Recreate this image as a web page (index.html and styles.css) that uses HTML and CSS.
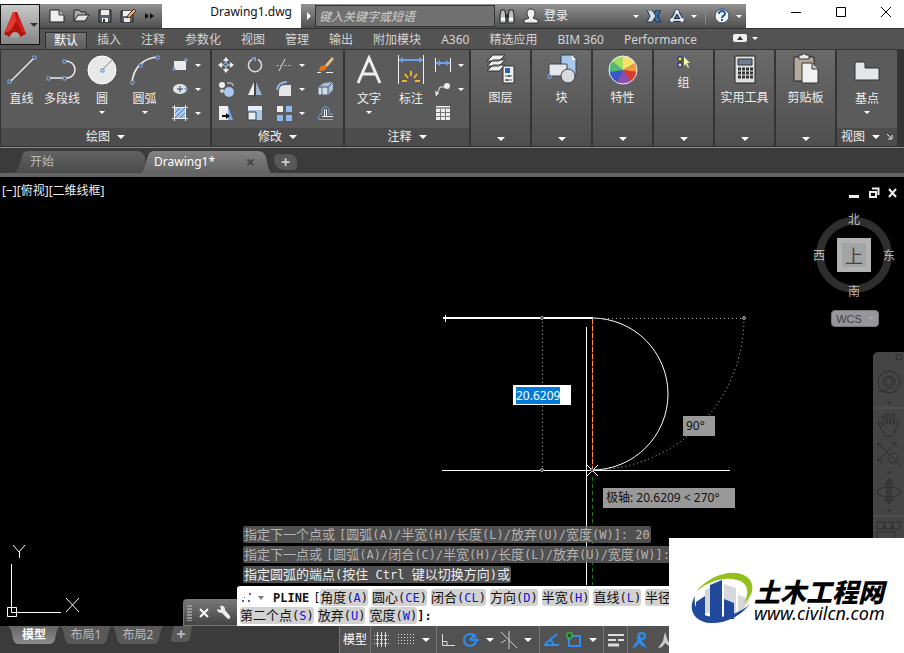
FILE: index.html
```html
<!DOCTYPE html>
<html lang="zh-CN">
<head>
    <meta charset="UTF-8">
    <meta name="viewport" content="width=device-width, initial-scale=1.0">
    <title>Drawing1.dwg</title>
    <link rel="stylesheet" href="styles.css">
</head>
<body>
    <header class="titlebar">
        <button class="app-btn" aria-label="应用程序菜单">
            <svg width="24" height="27" viewBox="0 0 24 27"><path d="M10 1h4l9 22-6 3q-1-4-5-4t-5 4l-6-3z" fill="#b3120f"/><path d="M10 1l2 0 1 9-5 9-6 3z" fill="#e23a30"/><path d="M14 1l9 22-4-2-6-11z" fill="#cc211c"/><path d="M7 26q1-5 5-5t5 5z" fill="#a4a4a4"/></svg>
            <span class="caret dark"></span>
        </button>
        <div class="quick">
            <button aria-label="新建"><svg width="16" height="14" viewBox="0 0 16 14"><path d="M1 1h9l5 5v7H1z" fill="#eee" stroke="#222"/><path d="M10 1v5h5" fill="#bbb" stroke="#333"/></svg></button>
            <button aria-label="打开"><svg width="17" height="14" viewBox="0 0 17 14"><path d="M1 12V1h5l2 2h5v3" fill="#aaa" stroke="#222"/><path d="M1 12l4-6h11l-4 6z" fill="#e2e2e2" stroke="#222"/></svg></button>
            <button aria-label="保存"><svg width="14" height="14" viewBox="0 0 14 14"><path d="M1 1h12v12H1z" fill="#59636e" stroke="#222"/><path d="M3 1h8v5H3zM4 9h6v4H4z" fill="#eee"/><path d="M5 10h2v3H5z" fill="#333"/></svg></button>
            <button aria-label="另存为"><svg width="17" height="14" viewBox="0 0 17 14"><path d="M1 2h12v11H1z" fill="#59636e" stroke="#222"/><path d="M3 2h8v5H3zM4 9h6v4H4z" fill="#eee"/><path d="M7 9l1-3 6-6 2 2-6 6z" fill="#f0b050" stroke="#533"/></svg></button>
            <button aria-label="更多"><svg width="9" height="8" viewBox="0 0 9 8"><path d="M0 1l4 3-4 3zM5 1l4 3-4 3z" fill="#111"/></svg></button>
        </div>
        <h1 class="title">Drawing1.dwg</h1>
        <div class="info">
            <span class="expand"></span>
            <input class="search" type="text" placeholder="键入关键字或短语" aria-label="搜索">
            <button aria-label="搜索帮助"><svg width="16" height="16" viewBox="0 0 16 16"><path d="M2 2h4v3l1 1v9H1V7zM10 2h4l1 5v8H9V6l1-1z" fill="#b8c0c2" stroke="#222"/><path d="M6 6h4v4H6z" fill="#333"/><path d="M2 11h4M10 11h4" stroke="#fff" stroke-width="3"/></svg></button>
            <button class="login"><svg width="16" height="16" viewBox="0 0 16 16"><path d="M8 1c3 0 4 2 4 4s-1 4-2 5l5 2v3H1v-3l5-2C5 9 4 7 4 5s1-4 4-4z" fill="#eee" stroke="#333"/></svg>登录</button>
            <span class="caret small push"></span>
            <button aria-label="Exchange"><svg width="14" height="13" viewBox="0 0 14 13"><path d="M14 0H9L6 6l3 6h5l-3-6z" fill="#3a6ea8" stroke="#234"/><path d="M0 0h5l4 6-4 6H0l3-6z" fill="#cfe0ef" stroke="#234"/></svg></button>
            <button class="drop-btn" aria-label="保持连接"><svg width="16" height="14" viewBox="0 0 16 14"><path d="M8 2l5 9H3z" fill="none" stroke="#234" stroke-width="4"/><path d="M8 2l5 9H3z" fill="none" stroke="#c8d6e8" stroke-width="2"/><circle cx="8" cy="3" r="2" fill="#e4edf6"/><circle cx="3" cy="11" r="2" fill="#e4edf6"/><circle cx="13" cy="11" r="2" fill="#e4edf6"/></svg><span class="caret small"></span></button>
            <i class="divider"></i>
            <button class="drop-btn" aria-label="帮助"><svg width="16" height="16" viewBox="0 0 16 16"><circle cx="8" cy="8" r="7" fill="#f4f7fa" stroke="#3a4048"/><path d="M5 6q0-3 3-3t3 3q0 1-2 2-1 1-1 2" fill="none" stroke="#1d5cad" stroke-width="2"/><path d="M7 11h2v2H7z" fill="#1d5cad"/></svg><span class="caret small"></span></button>
        </div>
        <div class="win-btns">
            <button aria-label="最小化"><svg width="12" height="12"><path d="M1 6.500h10" stroke="#000"/></svg></button>
            <button aria-label="最大化"><svg width="12" height="12"><path d="M1.500 1.500h9v9h-9z" fill="none" stroke="#000"/></svg></button>
            <button aria-label="关闭"><svg width="12" height="12"><path d="M1 1l10 10M11 1L1 11" stroke="#000"/></svg></button>
        </div>
    </header>

    <nav class="ribbon-tabs">
        <a href="#" class="active">默认</a>
        <a href="#">插入</a>
        <a href="#">注释</a>
        <a href="#">参数化</a>
        <a href="#">视图</a>
        <a href="#">管理</a>
        <a href="#">输出</a>
        <a href="#">附加模块</a>
        <a href="#">A360</a>
        <a href="#">精选应用</a>
        <a href="#">BIM 360</a>
        <a href="#">Performance</a>
        <button class="min-ribbon" aria-label="最小化功能区"><svg width="14" height="8" viewBox="0 0 14 8"><rect width="14" height="8" rx="2" fill="#eee"/><path d="M4 6l3-4 3 4z" fill="#333"/></svg><span class="caret small"></span></button>
    </nav>

    <section class="ribbon">
        <div class="panel draw">
            <div class="tools">
                <button class="big w-line"><svg width="30" height="30" viewBox="0 0 30 30"><path d="M3 27L28 2" stroke="#eee" stroke-width="1.500"/><g class="grip"><path d="M1 25h3v3H1zM26 1h3v3h-3z"/></g></svg>直线</button>
                <button class="big w-pline"><svg width="32" height="30" viewBox="0 0 32 30"><path d="M3 23h18c11-1 11-17-2-17" fill="none" stroke="#eee" stroke-width="1.500"/><g class="grip"><path d="M1 22h3v3H1zM17 22h3v3h-3zM17 5h3v3h-3z"/></g></svg>多段线</button>
                <button class="big w-circle"><svg width="30" height="30" viewBox="0 0 30 30"><circle cx="15" cy="15" r="14" fill="#e6e8ea" stroke="#fff"/><path d="M15 15L25 5" stroke="#5b8fd8"/><g class="grip light"><path d="M14 14h3v3h-3z"/></g></svg>圆<span class="caret small"></span></button>
                <button class="big w-arc"><svg width="30" height="30" viewBox="0 0 30 30"><path d="M2 28C3 14 12 3 28 2" fill="none" stroke="#eee" stroke-width="1.500"/><g class="grip"><path d="M1 26h3v3H1zM9 9h3v3H9zM26 1h3v3h-3z"/></g></svg>圆弧<span class="caret small"></span></button>
                <div class="smalls one">
                    <button aria-label="矩形"><svg width="16" height="16" viewBox="0 0 16 16"><path d="M2 4h12v9H2z" fill="#e8eaec"/><g class="grip"><path d="M1 11h2v2H1zM13 2h2v2h-2z"/></g></svg><span class="caret small"></span></button>
                    <button aria-label="椭圆"><svg width="16" height="16" viewBox="0 0 16 16"><ellipse cx="8" cy="8" rx="7" ry="5" fill="#e0e4e8"/><path d="M8 5v6M5 8h6" stroke="#345"/><g class="grip"><path d="M13 7h2v2h-2z"/></g></svg><span class="caret small"></span></button>
                    <button aria-label="图案填充"><svg width="16" height="16" viewBox="0 0 16 16"><path d="M3 3h10v10H3z" fill="#a9c8ee"/><path d="M3 13L13 3M3 8l5-5M8 13l5-5" stroke="#3f74b8"/><path d="M2.500 0v16M13.500 0v16M0 2.500h16M0 13.500h16" stroke="#eee"/></svg><span class="caret small"></span></button>
                </div>
            </div>
            <button class="panel-title">绘图<span class="caret"></span></button>
        </div>

        <div class="panel modify">
            <div class="tools">
                <div class="smalls four">
                    <button aria-label="移动"><svg width="16" height="16" viewBox="0 0 16 16"><path d="M8 0l3 4H5zM8 16l3-4H5zM0 8l4-3v6zM16 8l-4-3v6z" fill="#eee"/><path d="M8 3v10M3 8h10" stroke="#eee"/><g class="grip"><path d="M6 6h3v3H6z"/></g></svg></button>
                    <button aria-label="旋转"><svg width="16" height="16" viewBox="0 0 16 16"><path d="M5 2.500a6.500 6.500 0 1 0 6 0" fill="none" stroke="#ddd" stroke-width="1.500"/><path d="M4 0h5v5z" fill="#6ea0e6"/></svg></button>
                    <button aria-label="修剪"><svg width="16" height="16" viewBox="0 0 16 16"><path d="M0 8.500h5M8 8.500h8" stroke="#7ba7e4" stroke-dasharray="3 1"/><path d="M3 14L9 2" stroke="#ddd"/></svg><span class="caret small"></span></button>
                    <button aria-label="删除"><svg width="17" height="16" viewBox="0 0 17 16"><path d="M8 8l7-8 2 2-7 8z" fill="#e7c28f"/><path d="M2 14c0-4 2-5 5-6l3 2c-1 3-3 4-8 4z" fill="#e2741c"/><path d="M0 15.500h4M9 15.500h7" stroke="#eee"/></svg></button>

                    <button aria-label="复制"><svg width="17" height="16" viewBox="0 0 17 16"><circle cx="4" cy="4" r="3" fill="#eee"/><circle cx="4" cy="10" r="2" fill="#ccc"/><circle cx="11" cy="11" r="5" fill="#a9c8ee"/><path d="M9 2h4q2 0 2 3" fill="none" stroke="#ddd"/></svg></button>
                    <button aria-label="镜像"><svg width="16" height="16" viewBox="0 0 16 16"><path d="M7 1v13H1z" fill="#eee"/><path d="M9 1v13h6z" fill="#9db4cc"/><path d="M8 0v16" stroke="#333"/></svg></button>
                    <button aria-label="圆角"><svg width="16" height="16" viewBox="0 0 16 16"><path d="M3 15V10q0-6 6-6h6v11z" fill="#e4e6e8"/><path d="M1 9q1-8 10-8" fill="none" stroke="#8ab6f0" stroke-width="2"/></svg><span class="caret small"></span></button>
                    <button aria-label="分解"><svg width="16" height="16" viewBox="0 0 16 16"><path d="M1 6l6-4 9-1v8l-5 5H1z" fill="#a8bfda"/><path d="M1 6h10v8H1zM11 6l5-5" fill="#d5dde6" stroke="#4c5a6a"/><path d="M5 5v9" stroke="#567"/></svg></button>

                    <button aria-label="拉伸"><svg width="16" height="16" viewBox="0 0 16 16"><path d="M1 1h9v14H1z" fill="#eee"/><path d="M10 1l5 14h-5z" fill="#7aaae6"/><path d="M4 11h5" stroke="#111" stroke-width="2"/><path d="M8 8l4 3-4 3z" fill="#111"/></svg></button>
                    <button aria-label="缩放"><svg width="16" height="16" viewBox="0 0 16 16"><path d="M1 1h14v14H1z" fill="#a9c8ee"/><path d="M1 1h14v4H1z" fill="#eef"/><path d="M1 7h8v8H1z" fill="#eee" stroke="#345"/></svg></button>
                    <button aria-label="阵列"><svg width="16" height="16" viewBox="0 0 16 16"><path d="M1 1h6v6H1z" fill="#eee"/><path d="M10 1h6v6h-6zM1 10h6v6H1zM10 10h6v6h-6z" fill="#8db9ef"/></svg><span class="caret small"></span></button>
                    <button aria-label="偏移"><svg width="17" height="16" viewBox="0 0 17 16"><path d="M16 14.500H2q-2-5 3-5.500V4q4-5 7 0v5h4" fill="none" stroke="#7ba7e4"/><path d="M16 11.500H5M7.500 11V5q1-2 2 0v6" fill="none" stroke="#eee"/></svg></button>
                </div>
            </div>
            <button class="panel-title">修改<span class="caret"></span></button>
        </div>

        <div class="panel annotate">
            <div class="tools">
                <button class="big w-text"><svg width="28" height="30" viewBox="0 0 28 30"><path d="M3 28L14 3l11 25M7 19h14" fill="none" stroke="#eee" stroke-width="3"/></svg>文字<span class="caret small"></span></button>
                <button class="big w-text"><svg width="28" height="30" viewBox="0 0 28 30"><path d="M1.500 0v29M26.500 0v29" stroke="#eee"/><path d="M2 5h24" stroke="#6ea0e6" stroke-width="2"/><path d="M2 5l4-3v6zM26 5l-4-3v6z" fill="#6ea0e6"/><path d="M14 16v5M8 19l3 4M20 19l-3 4M5 26h5M18 26h5" stroke="#f6b12b" stroke-width="2"/></svg>标注</button>
                <div class="smalls one">
                    <button aria-label="线性"><svg width="16" height="16" viewBox="0 0 16 16"><path d="M.5 1v14M15.500 1v14" stroke="#eee"/><path d="M1 6h14" stroke="#6ea0e6" stroke-width="2"/><path d="M1 6l4-3v6zM15 6l-4-3v6z" fill="#6ea0e6"/></svg><span class="caret small"></span></button>
                    <button aria-label="引线"><svg width="16" height="16" viewBox="0 0 16 16"><path d="M1 15L5 6h6" fill="none" stroke="#eee"/><path d="M0 10l1 5 3-3z" fill="#eee"/><circle cx="12" cy="5" r="3" fill="#eee"/></svg><span class="caret small"></span></button>
                    <button aria-label="表格"><svg width="16" height="16" viewBox="0 0 16 16"><path d="M1 1h14v14H1z" fill="#eee"/><path d="M1 3h14" stroke="#999" stroke-width="2"/><path d="M1 7.500h14M1 11.500h14M5.500 4v11M10.500 4v11" stroke="#777"/></svg></button>
                </div>
            </div>
            <button class="panel-title">注释<span class="caret"></span></button>
        </div>

        <button class="slim"><svg width="30" height="32" viewBox="0 0 30 32"><g fill="#eee" stroke="#333"><path d="M1 18l6-6h12l-6 6zM1 13l6-6h12l-6 6zM1 8l6-6h12l-6 6z"/><path d="M17 13h11v17H17z"/></g><path d="M19 15h5v5h-5z" fill="#2c5fb4"/><path d="M19 23h7M19 27h7" stroke="#456"/><path d="M23 22v2M21 26v2" stroke="#111"/></svg>图层<span class="caret"></span></button>
        <button class="slim"><svg width="32" height="32" viewBox="0 0 32 32"><path d="M15 2h11l4 5v15H15z" fill="#a9c8ee" stroke="#345"/><path d="M26 2v5h4" fill="#fff"/><path d="M3 11h18v12H3z" fill="#e4e6ea" stroke="#444"/><circle cx="22" cy="23" r="7" fill="#d8dadd" stroke="#444"/><g class="grip"><path d="M2 22h3v3H2z"/></g></svg>块<span class="caret"></span></button>
        <button class="slim"><svg width="30" height="32" viewBox="0 0 30 32"><g transform="translate(15 17)"><path d="M0 0V-14A14 14 0 0 1 12-7z" fill="#f7e36b"/><path d="M0 0L12-7A14 14 0 0 1 14 2z" fill="#f0963c"/><path d="M0 0l14 2a14 14 0 0 1-6 10z" fill="#d93a2e"/><path d="M0 0l8 12a14 14 0 0 1-14 1z" fill="#8a4fb0"/><path d="M0 0l-6 13A14 14 0 0 1-14 2z" fill="#3a58c8"/><path d="M0 0l-14 2a14 14 0 0 1 3-11z" fill="#4fb872"/><path d="M0 0l-11-9A14 14 0 0 1 0-14z" fill="#a5dc62"/><circle r="14" fill="none" stroke="#eee"/></g></svg>特性<span class="caret"></span></button>
        <button class="slim group"><svg width="16" height="16" viewBox="0 0 16 16"><path d="M.5 2.500h10v11H.5z" fill="none" stroke="#4a6ee0" stroke-dasharray="1 2"/><path d="M2 3h4v4H2z" fill="#d9e86a" stroke="#222"/><path d="M2 9h4v4H2z" fill="#ccd" stroke="#222"/><path d="M8 3v9l2-2 2 4 1-1-2-4h3z" fill="#f4f8b0"/></svg>组<span class="caret"></span></button>
        <button class="slim"><svg width="24" height="32" viewBox="0 0 24 32"><path d="M2 3h20v27H2z" fill="#dfe0e2" stroke="#222"/><path d="M5 6h14v6H5z" fill="#6c7f92" stroke="#333"/><g stroke="#333" stroke-width="3" stroke-dasharray="3 1"><path d="M5 16h15M5 20h15M5 24h15"/></g></svg>实用工具<span class="caret"></span></button>
        <button class="slim"><svg width="28" height="32" viewBox="0 0 28 32"><path d="M2 4h20v24H2z" fill="#b5aa9a" stroke="#222"/><path d="M7 2h3q2-3 4 0h3v4H7z" fill="#eee" stroke="#333"/><path d="M10 10h10l6 6v14H10z" fill="#f0f1f3" stroke="#333"/><path d="M20 10v6h6" fill="#ccc" stroke="#333"/></svg>剪贴板<span class="caret"></span></button>

        <div class="panel view">
            <div class="tools">
                <button class="big w-base"><svg width="28" height="30" viewBox="0 0 28 30"><path d="M2 7h10v6h14v12H2z" fill="#e4e6e8" stroke="#333"/></svg>基点<span class="caret small"></span></button>
            </div>
            <button class="panel-title">视图<span class="caret"></span><svg width="6" height="6" viewBox="0 0 6 6"><path d="M0 0l4 4M5 1v4H1" fill="none" stroke="#eee"/></svg></button>
        </div>
    </section>

    <nav class="doc-tabs">
        <a href="#" class="doc start">开始</a>
        <a href="#" class="doc current">Drawing1*<span class="close">×</span></a>
        <button class="new-doc" aria-label="新图形">+</button>
    </nav>

    <main class="viewport">
        <svg class="drawing" width="100%" height="100%">
            <g stroke="#fff" fill="none">
                <path d="M443 141h150" stroke-width="2"/>
                <path d="M445.500 138v7"/>
                <path d="M442 293.500h288"/>
                <path d="M586.500 150v258"/>
                <path d="M592 141a76 76 0 0 1 0 152"/>
                <path d="M587 288l11 11M598 288l-11 11"/>
            </g>
            <g stroke="#aaa" fill="none" stroke-dasharray="1 3">
                <path d="M592 141.500h152"/>
                <path d="M542.500 141v152"/>
                <path d="M744 141a152 152 0 0 1-152 152" stroke="#ccc"/>
            </g>
            <path d="M592.500 142v150" stroke="#a02010"/>
            <path d="M592.500 142v150" stroke="#ff9a50" stroke-dasharray="5 2"/>
            <path d="M592.500 300v108" stroke="#1d7a24" stroke-dasharray="4 3"/>
            <g fill="#333" stroke="#aaa">
                <circle cx="542" cy="141" r="1.500"/>
                <circle cx="744" cy="141" r="1.500"/>
                <circle cx="542" cy="293" r="1.500"/>
                <circle cx="592" cy="293" r="1.500"/>
            </g>
        </svg>

        <div class="view-label">[−][俯视][二维线框]</div>
        <input class="dyn-input" id="dyn-input" type="text" value="20.6209" aria-label="长度">
        <span class="tip angle">90°</span>
        <span class="tip polar">极轴: 20.6209 &lt; 270°</span>

        <div class="doc-btns">
            <svg width="50" height="12" viewBox="0 0 50 12" fill="none" stroke="#eee"><path d="M1 9.500h10" stroke-width="3"/><path d="M22 5h6v5h-6z" stroke-width="2"/><path d="M24 1.500h6.500V8" stroke-width="2"/><path d="M41 2l7 8M48 2l-7 8" stroke-width="2"/></svg>
        </div>

        <div class="cube">
            <span class="n">北</span>
            <span>西</span>
            <button class="face">上</button>
            <span>东</span>
            <span class="s">南</span>
        </div>
        <button class="wcs">WCS<span class="caret small"></span></button>

        <div class="navbar">
            <svg width="31" height="196" viewBox="0 0 31 196" fill="none" stroke="#2e2e2e">
                <circle cx="26" cy="5" r="3"/>
                <circle cx="16" cy="30" r="11"/><circle cx="16" cy="30" r="6"/><path d="M5 39h10M13 25h6v8h-6z"/>
                <path d="M1 56h29M1 164h29" stroke="#595959"/>
                <path d="M8 76l-3-5 2-1 4 4-2-10 2-1 3 9V61h2l1 11 3-10 2 1-2 10 4-5 2 1-5 12q-4 6-9 3z"/>
                <path d="M5 91l18 18M23 91L5 109M5 96v-5h5M18 91h5v5M5 104v5h5"/><circle cx="20" cy="106" r="5"/><path d="M24 110l5 5"/>
                <path d="M16 127v24M14 129v20h4v-20zM11 133l5-6 5 6M11 146l5 6 5-6"/><ellipse cx="16" cy="140" rx="12" ry="5"/>
                <path d="M4 170h7v7H4zM12 170h7v7h-7zM20 170h7v7h-7zM4 180h18v12H4z"/>
                <path d="M14 50l2 2 2-2zM14 120l2 2 2-2zM14 158l2 2 2-2z"/>
            </svg>
        </div>

        <svg class="ucs" width="82" height="82" viewBox="0 0 82 82" fill="none" stroke="#fff">
            <path d="M11.500 20v48.500H61M7.500 63.500h9v9h-9z"/>
            <path d="M13 1l6 7 6-7M19.500 8v6M66 54l13 14M79 54L66 68"/>
        </svg>

        <div class="command">
            <div class="cmd-handle">
                <i class="dots"></i>
                <button aria-label="关闭"><svg width="10" height="10"><path d="M1 1l8 8M9 1L1 9" stroke="#fff" stroke-width="2"/></svg></button>
                <button aria-label="自定义"><svg width="15" height="15" viewBox="0 0 15 15"><path d="M1 4l3 1 1-1-1-3q5-1 5 4l5 6q1 3-2 3L6 8Q1 8 1 4z" fill="#eee"/></svg></button>
            </div>
            <div class="cmd-body">
                <p class="old">指定下一个点或<span class="open">[</span>圆弧<span>(A)/</span>半宽<span>(H)/</span>长度<span>(L)/</span>放弃<span>(U)/</span>宽度<span>(W)]: 20</span></p>
                <p class="old">指定下一点或<span class="open">[</span>圆弧<span>(A)/</span>闭合<span>(C)/</span>半宽<span>(H)/</span>长度<span>(L)/</span>放弃<span>(U)/</span>宽度<span>(W)]:</span></p>
                <p>指定圆弧的端点<span>(</span>按住<span> Ctrl </span>键以切换方向<span>)</span>或</p>
                <div class="prompt">
                    <div class="row">
                        <svg width="24" height="12" viewBox="0 0 24 12"><path d="M1 8h2v2H1zM7 8h2v2H7zM8 1h2v2H8zM3 5h1v1H3z" fill="#3f6bbd"/><path d="M17 4h6l-3 4z" fill="#777"/></svg>
                        <strong>PLINE</strong>
                        <span class="bracket">[</span>
                        <button>角度<span>(<b>A</b>)</span></button>
                        <button>圆心<span>(<b>CE</b>)</span></button>
                        <button>闭合<span>(<b>CL</b>)</span></button>
                        <button>方向<span>(<b>D</b>)</span></button>
                        <button>半宽<span>(<b>H</b>)</span></button>
                        <button>直线<span>(<b>L</b>)</span></button>
                        <button>半径<span>(<b>R</b>)</span></button>
                    </div>
                    <div class="row">
                        <button>第二个点<span>(<b>S</b>)</span></button>
                        <button>放弃<span>(<b>U</b>)</span></button>
                        <button>宽度<span>(<b>W</b>)</span></button>
                        <span class="end">]:</span>
                    </div>
                </div>
            </div>
        </div>
    </main>

    <footer class="statusbar">
        <nav class="layouts">
            <a href="#" class="on">模型</a>
            <a href="#">布局1</a>
            <a href="#">布局2</a>
            <button aria-label="新建布局">+</button>
        </nav>
        <div class="status">
            <div class="cell model-cell"><button>模型</button></div>
            <div class="cell grid">
                <button aria-label="栅格"><svg width="16" height="16" viewBox="0 0 16 16"><path d="M3.500 0v15M7.500 0v15M11.500 0v15" stroke="#ddd"/><path d="M0 3.500h16M0 7.500h16M0 11.500h16" stroke="#ccc" stroke-dasharray="1 1"/></svg></button>
                <button aria-label="捕捉"><svg width="16" height="16" viewBox="0 0 16 16"><path d="M0 2.500h16M0 5.500h16M0 8.500h16M0 11.500h16" stroke="#ddd" stroke-dasharray="1 2"/></svg></button>
                <span class="caret"></span>
            </div>
            <div class="cell polar-cell">
                <button aria-label="正交"><svg width="16" height="16" viewBox="0 0 16 16"><path d="M2.500 2v11.500H15M3 9.500h4V13" fill="none" stroke="#ddd"/></svg></button>
                <button aria-label="极轴追踪"><svg width="18" height="16" viewBox="0 0 18 16"><circle cx="8" cy="8" r="6" fill="none" stroke="#2f8df0" stroke-width="2"/><path d="M8 8h9M8 8l5-6" stroke="#2f8df0" stroke-width="2"/></svg></button>
                <span class="caret"></span>
                <button aria-label="等轴测草图"><svg width="18" height="18" viewBox="0 0 18 18"><path d="M1 1l16 16M9 0v18M1 12l5-3" stroke="#ccc"/></svg></button>
                <span class="caret"></span>
            </div>
            <div class="cell snap-cell">
                <button aria-label="对象捕捉追踪"><svg width="16" height="16" viewBox="0 0 16 16"><path d="M1 13h15M2 12L14 2M8 8l3 5" fill="none" stroke="#2f8df0" stroke-width="2"/></svg></button>
                <button aria-label="对象捕捉"><svg width="16" height="16" viewBox="0 0 16 16"><path d="M3 4h11v10H3z" fill="none" stroke="#2f8df0" stroke-width="2"/><path d="M1 1h5v5H1z" fill="#1f5f1f" stroke="#29e029"/></svg></button>
                <span class="caret"></span>
            </div>
            <div class="cell"><button aria-label="线宽"><svg width="17" height="16" viewBox="0 0 17 16"><path d="M1 3h16M1 8h8M11 8h6" stroke="#ddd" stroke-width="2"/><path d="M1 13h11" stroke="#ddd" stroke-width="3"/></svg></button></div>
            <div class="cell scale-cell">
                <button aria-label="注释可见性"><svg width="18" height="18" viewBox="0 0 18 18"><path d="M7 1l4 9 5 7-5-2-3-3-3 4-4 1 5-7z" fill="#2f8df0"/><circle cx="11" cy="5" r="3" fill="#555" stroke="#2f8df0" stroke-width="2"/></svg></button>
                <button aria-label="自动缩放"><svg width="18" height="18" viewBox="0 0 18 18"><path d="M8 1l3 9 6 7-5-2-4-3-3 4-4 1 5-7z" fill="#ccc"/></svg></button>
            </div>
        </div>
    </footer>

    <a href="#" class="brand">
        <svg width="66" height="56" viewBox="0 0 66 56">
            <path d="M33 12l12 4v30H33zM47 23l12 4-9 14h-3zM14 18l6-3v26h-6z" fill="#d5d7dc"/>
            <path d="M19 13l12-5v42H19zM33 27l10 4v16H33zM5 30l9-6v20l-9-5z" fill="#20499b"/>
            <path d="M5 20C17 4 42-5 56 5c9 7 6 19-3 26 6-11 4-20-7-23C32 4 16 10 5 20z" fill="#93c01f"/>
            <path d="M4 24C-4 37 3 50 19 51c15 1 31-7 40-19-11 10-25 14-37 13C8 44 2 36 4 24z" fill="#20499b"/>
        </svg>
        <span class="brand-text"><strong>土木工程网</strong><em>www.civilcn.com</em></span>
    </a>

    <script>
        const dynInput = document.getElementById('dyn-input');
        dynInput.focus();
        dynInput.select();
    </script>
</body>
</html>
```

FILE: styles.css
```css
* {
    box-sizing: border-box;
}
body {
    margin: 0;
    min-height: 100vh;
    display: flex;
    flex-direction: column;
    overflow: hidden;
    background: #3b3b3b;
    color: #eee;
    font-family: "Noto Sans", "Noto Sans CJK SC", sans-serif;
    font-size: 12px;
    line-height: 16px;
}
button {
    border: 0;
    padding: 0;
    background: none;
    color: inherit;
    font: inherit;
    display: flex;
    align-items: center;
    justify-content: center;
    white-space: nowrap;
}
a {
    color: inherit;
    text-decoration: none;
    white-space: nowrap;
}
svg {
    display: block;
    flex: none;
}
.caret {
    flex: none;
    border: 4px solid transparent;
    border-top-color: #fff;
    border-bottom: 0;
}
.caret.small {
    border-width: 3px;
    border-bottom: 0;
}
.caret.dark {
    border-top-color: #333;
}
.grip path {
    fill: #45474b;
    stroke: #86b1f2;
}
.grip.light path {
    fill: #e6e8ea;
    stroke: #5b8fd8;
}

/* title bar */
.titlebar {
    display: flex;
    height: 29px;
    padding-top: 4px;
    background: #fff;
    border-bottom: 1px solid #333;
}
.app-btn {
    position: relative;
    z-index: 2;
    width: 40px;
    height: 41px;
    gap: 3px;
    border: 1px solid #111;
    background: linear-gradient(#c9c9c9, #858585);
}
.quick {
    display: flex;
    align-items: center;
    gap: 8px;
    width: 122px;
    padding-left: 9px;
    background: linear-gradient(#929292, #4e4e4e);
}
.title {
    width: 139px;
    margin: 0;
    padding-right: 9px;
    color: #111;
    font-size: 12px;
    font-weight: 400;
    text-align: right;
}
.info {
    display: flex;
    align-items: center;
    flex: 0 1 445px;
    gap: 8px;
    padding-right: 4px;
    background: linear-gradient(#929292, #4e4e4e);
}
.expand {
    margin-left: 6px;
    border: 4px solid transparent;
    border-left-color: #fff;
    border-right: 0;
}
.search {
    width: 180px;
    height: 22px;
    margin-left: -4px;
    padding: 0 3px;
    border: 1px solid #333;
    background: #707070;
    color: #eee;
    font: italic 12px "Noto Sans", "Noto Sans CJK SC", sans-serif;
}
.search::placeholder {
    color: #d0d0d0;
}
.login {
    gap: 5px;
}
.info > .search + button {
    margin-left: -4px;
}
.push {
    margin-left: auto;
}
.drop-btn {
    gap: 6px;
}
.divider {
    width: 1px;
    height: 18px;
    background: #888;
}
.win-btns {
    display: flex;
    flex: 1;
    justify-content: flex-end;
    gap: 33px;
    padding: 0 12px 8px 0;
}

/* ribbon */
.ribbon-tabs {
    display: flex;
    align-items: flex-end;
    height: 20px;
    padding-left: 45px;
    background: #535353;
    color: #d4d4d4;
}
.ribbon-tabs a {
    padding: 1px 10px;
}
.ribbon-tabs .active {
    padding: 0 8px;
    border: 1px solid #303030;
    border-bottom: 0;
    background: linear-gradient(#747474, #5e5e5e);
    color: #fff;
}
.min-ribbon {
    gap: 5px;
    margin: 0 0 7px 26px;
}
.ribbon {
    display: flex;
    gap: 2px;
    height: 98px;
    padding: 1px 0 1px 1px;
    background: #343434;
}
.panel {
    display: flex;
    flex-direction: column;
    background: #5b5b5b;
}
.draw {
    width: 209px;
}
.modify {
    width: 131px;
}
.annotate {
    width: 124px;
}
.view {
    flex: 0 0 60px;
}
.tools {
    display: flex;
    flex: 1;
    padding-top: 5px;
}
.big {
    flex-direction: column;
    justify-content: flex-start;
    gap: 6px;
}
.big .caret {
    margin-top: -2px;
}
.w-line {
    width: 41px;
}
.w-pline,
.w-circle {
    width: 40px;
}
.w-arc {
    width: 45px;
}
.w-text {
    width: 42px;
}
.w-base {
    width: 60px;
}
.annotate .tools {
    padding-left: 3px;
}
.smalls {
    display: grid;
    grid-template-rows: repeat(3, 24px);
    align-items: center;
    margin-top: -2px;
}
.smalls button {
    justify-content: flex-start;
    gap: 7px;
}
.one {
    padding-left: 5px;
}
.annotate .one {
    padding-left: 3px;
}
.four {
    grid-template-columns: 29px 29px 41px 20px;
    padding-left: 6px;
}
.panel-title {
    height: 18px;
    gap: 7px;
    background: #4c4c4c;
}
.slim {
    flex: none;
    width: 59px;
    flex-direction: column;
    justify-content: flex-start;
    gap: 5px;
    padding: 3px 0 5px;
    background: linear-gradient(#6a6a6a, #4e4e4e);
}
.slim .caret {
    margin-top: auto;
}
.group {
    padding-top: 4px;
}

/* drawing tabs */
.doc-tabs {
    display: flex;
    align-items: flex-end;
    height: 30px;
    padding-left: 13px;
    background: #3b3b3b;
    border-top: 1px solid #8a8a8a;
    border-bottom: 4px solid #646464;
}
.doc {
    display: flex;
    align-items: center;
    justify-content: space-between;
    height: 22px;
}
.start {
    width: 132px;
    padding-left: 17px;
    background: linear-gradient(#626262, #4a4a4a);
    color: #bbb;
    clip-path: path("M0 22Q5 20 7 12L9 5Q10 0 16 0H122Q132 0 132 8V22Z");
}
.current {
    width: 130px;
    margin-left: -4px;
    padding: 0 16px 0 13px;
    background: linear-gradient(#828282, #646464);
    color: #fff;
    clip-path: path("M0 22Q3 20 5 11L7 5Q8 0 14 0H117Q123 0 125 6L127 16Q128 20 130 22Z");
}
.close {
    color: #444;
    font-size: 16px;
    font-weight: 700;
}
.new-doc {
    width: 23px;
    height: 16px;
    margin: 0 0 3px 3px;
    border-radius: 4px 8px 4px 10px;
    background: #585858;
    color: #ccc;
    font-size: 16px;
    font-weight: 700;
}

/* model space */
.viewport {
    position: relative;
    flex: 1;
    overflow: hidden;
    background: #000;
}
.drawing {
    position: absolute;
    inset: 0;
}
.view-label {
    position: absolute;
    top: 6px;
    left: 2px;
}
.dyn-input {
    position: absolute;
    top: 208px;
    left: 513px;
    width: 58px;
    height: 20px;
    padding: 0 3px;
    border: 0;
    outline: 0;
    color: #111;
    font: 12px "Noto Sans", sans-serif;
}
.dyn-input::selection {
    background: rgba(0, 120, 215, 0.99);
    color: #fff;
}
.tip {
    position: absolute;
    height: 20px;
    padding: 2px 3px;
    background: #999;
    color: #111;
}
.angle {
    top: 239px;
    left: 683px;
    width: 32px;
}
.polar {
    top: 311px;
    left: 603px;
    width: 132px;
}
.doc-btns {
    position: absolute;
    top: 10px;
    right: 6px;
}
.cube {
    position: absolute;
    top: 33px;
    right: 6px;
    display: grid;
    grid-template: 18px 54px 18px / 18px 52px 18px;
    place-items: center;
    color: #bbb;
    font-family: "Noto Sans CJK SC", sans-serif;
}
.cube::before {
    content: "";
    position: absolute;
    top: 7px;
    left: 6px;
    box-sizing: border-box;
    width: 76px;
    height: 76px;
    border: 8px solid #2e2e2e;
    border-radius: 50%;
}
.cube > * {
    position: relative;
}
.n {
    grid-column: 1 / 4;
}
.s {
    grid-column: 2;
}
.face {
    width: 34px;
    height: 34px;
    border: 5px solid #b2b2b2;
    background: #a2a5a5;
    color: #444;
    font-size: 18px;
}
.wcs {
    position: absolute;
    top: 133px;
    right: 25px;
    width: 48px;
    height: 17px;
    gap: 6px;
    border: 1px solid #777;
    border-radius: 4px;
    background: #96969c;
    color: #444;
    font: 11px "Liberation Sans", sans-serif;
}
.wcs .caret {
    border-top-color: #a5b0ba;
}
.navbar {
    position: absolute;
    top: 175px;
    right: 0;
    border-radius: 5px 0 0 5px;
    background: #454545;
}
.ucs {
    position: absolute;
    bottom: 0;
    left: 0;
}

/* command line */
.command {
    position: absolute;
    right: 0;
    bottom: 0;
    left: 183px;
    display: flex;
    align-items: flex-end;
}
.cmd-handle {
    display: flex;
    flex: 0 0 54px;
    align-items: center;
    gap: 7px;
    height: 27px;
    padding-left: 3px;
    border: 1px solid #777;
    border-right: 0;
    border-radius: 4px 0 0 0;
    background: linear-gradient(#777, #444);
}
.dots {
    width: 5px;
    height: 16px;
    background: repeating-linear-gradient(#999 0 2px, transparent 2px 3px);
}
.cmd-body {
    flex: 1;
    min-width: 0;
    font-family: "DejaVu Sans Mono", "Noto Sans CJK SC", monospace;
    font-size: 13px;
}
.cmd-body span,
.cmd-body strong {
    font-size: 12px;
}
.cmd-body p {
    width: max-content;
    height: 17px;
    margin: 0 0 3px 6px;
    padding: 0 1px;
    border-radius: 2px;
    background: rgba(100, 100, 100, 0.8);
    line-height: 17px;
    white-space: pre;
}
.cmd-body .old {
    color: #b4b4b4;
}
.open {
    margin-left: 4px;
}
.prompt {
    display: flex;
    flex-direction: column;
    gap: 1px;
    height: 40px;
    padding: 3px;
    border-radius: 3px 0 0 0;
    background: #fff;
    color: #111;
    overflow: hidden;
}
.row {
    display: flex;
    align-items: center;
    gap: 4px;
    height: 17px;
}
.row svg {
    margin-left: 1px;
}
.row strong {
    margin-left: 4px;
}
.row .bracket {
    margin-right: -4px;
}
.row .end {
    margin-left: -4px;
    font-weight: 700;
}
.row button {
    height: 17px;
    border-radius: 3px;
    background: #d2d2d2;
}
.row b {
    color: #1414e0;
    font-weight: 400;
}

/* status bar */
.statusbar {
    display: flex;
    height: 27px;
    background: #3b3b3b;
}
.layouts {
    display: flex;
    flex: 0 0 339px;
    align-items: flex-start;
    padding-left: 8px;
}
.layouts a,
.layouts button {
    width: 52px;
    height: 18px;
    background: #595959;
    color: #bbb;
    text-align: center;
    line-height: 18px;
    clip-path: path("M0 0H52Q49 2 48 8L47 13Q46 18 41 18H11Q6 18 5 13L4 8Q3 2 0 0Z");
}
.layouts button {
    width: 22px;
    height: 16px;
    margin-left: 6px;
    font-size: 16px;
    font-weight: 700;
    clip-path: path("M4 0H22L20 12Q19 16 15 16H3Q0 16 1 12Z");
}
.layouts .on {
    background: linear-gradient(#666, #8c8c8c);
    color: #fff;
    font-weight: 700;
}
.status {
    display: flex;
    flex: 1;
    min-width: 0;
    background: #525252;
}
.cell {
    display: flex;
    flex: none;
    align-items: center;
    gap: 8px;
    padding: 0 3px;
    border-left: 1px solid #777;
    color: #fff;
}
.model-cell {
    width: 31px;
}
.grid {
    width: 66px;
}
.polar-cell {
    width: 103px;
    gap: 6px;
}
.snap-cell {
    width: 64px;
    gap: 7px;
}

/* site mark in the corner */
.brand {
    position: fixed;
    right: 0;
    bottom: 0;
    display: flex;
    align-items: center;
    width: 235px;
    height: 115px;
    padding: 8px 0 0 22px;
    background: #fff;
    color: #000;
}
.brand-text {
    display: flex;
    flex-direction: column;
    margin-left: -3px;
}
.brand-text strong {
    font: italic 900 26px/26px "Noto Sans CJK SC", sans-serif;
}
.brand-text em {
    font: italic 18px/18px "Noto Sans", sans-serif;
}
```
